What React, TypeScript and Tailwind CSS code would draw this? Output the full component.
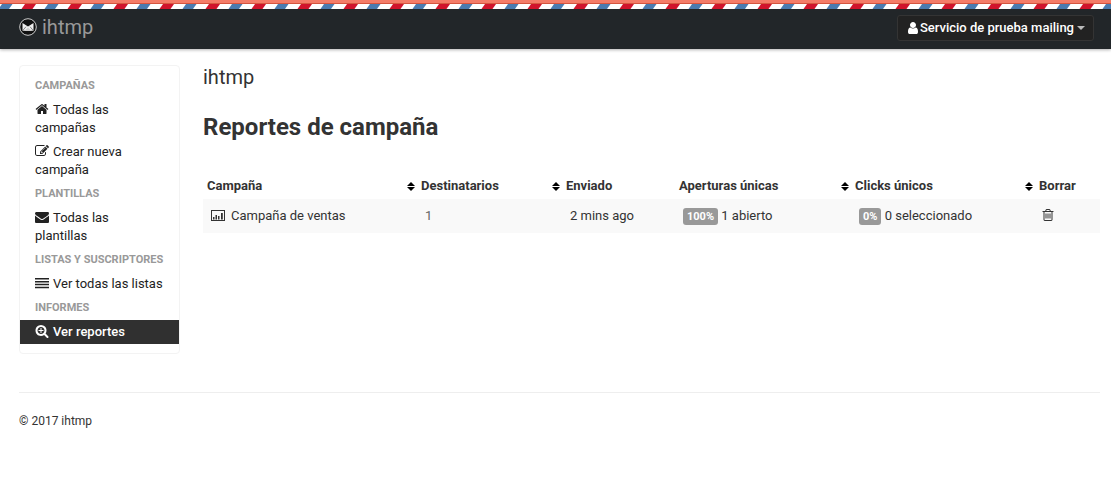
import type { ReactNode } from "react";

interface IconProps {
  d: string;
  className?: string;
}

function Icon({ d, className = "" }: IconProps) {
  return (
    <svg
      viewBox="0 0 1792 1792"
      fill="currentColor"
      aria-hidden="true"
      className={`inline-block size-[14px] align-[-2px] ${className}`}
    >
      <path d={d} />
    </svg>
  );
}

const icons = {
  home: "M1472 992v480q0 26-19 45t-45 19h-384v-384h-256v384h-384q-26 0-45-19t-19-45v-480q0-1 .5-3t.5-3l575-474 575 474q1 2 1 6zm223-69l-62 74q-8 9-21 11h-3q-13 0-21-7l-692-577-692 577q-12 8-24 7-13-2-21-11l-62-74q-8-10-7-23.5t11-21.5l719-599q32-26 76-26t76 26l244 204v-195q0-14 9-23t23-9h192q14 0 23 9t9 23v408l219 182q10 8 11 21.5t-7 23.5z",
  edit: "M888 1184l116-116-152-152-116 116v56h96v96h56zm440-720q-16-16-33 1l-350 350q-17 17-1 33t33-1l350-350q17-17 1-33zm80 594v190q0 119-84.5 203.5t-203.5 84.5h-832q-119 0-203.5-84.5t-84.5-203.5v-832q0-119 84.5-203.5t203.5-84.5h832q63 0 117 25 15 7 18 23 3 17-9 29l-49 49q-14 14-32 8-23-6-45-6h-832q-66 0-113 47t-47 113v832q0 66 47 113t113 47h832q66 0 113-47t47-113v-126q0-13 9-22l64-64q15-15 35-7t20 29zm-96-738l288 288-672 672h-288v-288zm444 132l-92 92-288-288 92-92q28-28 68-28t68 28l152 152q28 28 28 68t-28 68z",
  envelope:
    "M1792 710v794q0 66-47 113t-113 47h-1472q-66 0-113-47t-47-113v-794q44 49 101 87 362 246 497 345 57 42 92.5 65.5t94.5 48 110 24.5h2q51 0 110-24.5t94.5-48 92.5-65.5q170-123 498-345 57-39 100-87zm0-294q0 79-49 151t-122 123q-376 261-468 325-10 7-42.5 31t-54 38.5-52 32.5-57.5 27-50 9h-2q-23 0-50-9t-57.5-27-52-32.5-54-38.5-42.5-31q-91-64-262-182.5t-205-142.5q-62-42-117-115.5t-55-136.5q0-78 41.5-130t118.5-52h1472q65 0 112.5 47t47.5 113z",
  list: "M0 256h1792v200H0zM0 624h1792v200H0zM0 992h1792v200H0zM0 1360h1792v200H0z",
  zoomIn:
    "M1088 800v64q0 13-9.5 22.5t-22.5 9.5h-224v224q0 13-9.5 22.5t-22.5 9.5h-64q-13 0-22.5-9.5t-9.5-22.5v-224h-224q-13 0-22.5-9.5t-9.5-22.5v-64q0-13 9.5-22.5t22.5-9.5h224v-224q0-13 9.5-22.5t22.5-9.5h64q13 0 22.5 9.5t9.5 22.5v224h224q13 0 22.5 9.5t9.5 22.5zm128 32q0-185-131.5-316.5t-316.5-131.5-316.5 131.5-131.5 316.5 131.5 316.5 316.5 131.5 316.5-131.5 131.5-316.5zm512 832q0 53-37.5 90.5t-90.5 37.5q-54 0-90-38l-343-342q-179 124-399 124-143 0-273.5-55.5t-225-150-150-225-55.5-273.5 55.5-273.5 150-225 225-150 273.5-55.5 273.5 55.5 225 150 150 225 55.5 273.5q0 220-124 399l343 343q37 37 37 90z",
  trash:
    "M704 736v576q0 14-9 23t-23 9h-64q-14 0-23-9t-9-23v-576q0-14 9-23t23-9h64q14 0 23 9t9 23zm256 0v576q0 14-9 23t-23 9h-64q-14 0-23-9t-9-23v-576q0-14 9-23t23-9h64q14 0 23 9t9 23zm256 0v576q0 14-9 23t-23 9h-64q-14 0-23-9t-9-23v-576q0-14 9-23t23-9h64q14 0 23 9t9 23zm128 724v-948h-896v948q0 22 7 40.5t14.5 27 10.5 8.5h832q3 0 10.5-8.5t14.5-27 7-40.5zm-672-1076h448l-48-117q-7-9-17-11h-317q-10 2-17 11zm928 32v64q0 14-9 23t-23 9h-96v948q0 83-47 143.5t-113 60.5h-832q-66 0-113-58.5t-47-141.5v-952h-96q-14 0-23-9t-9-23v-64q0-14 9-23t23-9h309l70-167q15-37 54-63t79-26h320q40 0 79 26t54 63l70 167h309q14 0 23 9t9 23z",
  user: "M1536 1399q0 109-62.5 187t-150.5 78h-854q-88 0-150.5-78t-62.5-187q0-85 8.5-160.5t31.5-152 58.5-131 94-89 134.5-34.5q131 128 313 128t313-128q76 0 134.5 34.5t94 89 58.5 131 31.5 152 8.5 160.5zm-256-887q0 159-112.5 271.5t-271.5 112.5-271.5-112.5-112.5-271.5 112.5-271.5 271.5-112.5 271.5 112.5 112.5 271.5z",
};

const menu = [
  {
    title: "Campañas",
    items: [
      { label: "Todas las campañas", icon: icons.home },
      { label: "Crear nueva campaña", icon: icons.edit },
    ],
  },
  {
    title: "Plantillas",
    items: [{ label: "Todas las plantillas", icon: icons.envelope }],
  },
  {
    title: "Listas y suscriptores",
    items: [{ label: "Ver todas las listas", icon: icons.list }],
  },
  {
    title: "Informes",
    items: [{ label: "Ver reportes", icon: icons.zoomIn, active: true }],
  },
];

const columns = [
  { label: "Campaña", sortable: true, width: "" },
  { label: "Destinatarios", sortable: true, width: "w-[145px]" },
  { label: "Enviado", sortable: false, width: "w-[113px]" },
  { label: "Aperturas únicas", sortable: true, width: "w-[176px]" },
  { label: "Clicks únicos", sortable: true, width: "w-[184px]" },
  { label: "Borrar", sortable: false, width: "w-[65px]" },
];

// Airmail edge along the top of the page
function AirmailStripes() {
  return (
    <svg className="block h-[5px] w-full" aria-hidden="true">
      <defs>
        <pattern
          id="airmail"
          x="-2"
          width="46"
          height="5"
          patternUnits="userSpaceOnUse"
        >
          <rect width="46" height="5" fill="#fff" />
          <path d="M4 0h10.500l-3.500 5h-10.500z" fill="#4a7bb0" />
          <path d="M27 0h11l-3.500 5h-11z" fill="#d0142c" />
        </pattern>
      </defs>
      <rect width="100%" height="5" fill="url(#airmail)" />
    </svg>
  );
}

function Logo() {
  return (
    <svg viewBox="0 0 18 18" className="size-[18px]" aria-hidden="true">
      <circle cx="9" cy="9" r="8.300" fill="#111" stroke="#ccc" strokeWidth="1" />
      <path d="M3.500 5v7.800h11V5L9 8.500z" fill="#eee" />
      <path d="M3.500 12.800L7 8.700M14.500 12.800L11 8.700" stroke="#555" strokeWidth=".7" />
      <path d="M5 13l4-3.200L13 13z" fill="#ccc" />
    </svg>
  );
}

function SortArrows() {
  return (
    <svg viewBox="0 0 8 9" className="-mr-0.5 h-[9px] w-2" aria-hidden="true">
      <path d="M0 4L4 0l4 4zM0 5h8L4 9z" fill="#000" />
    </svg>
  );
}

function ChartIcon() {
  return (
    <svg viewBox="0 0 14 12" className="h-3 w-[14px]" aria-hidden="true">
      <rect x=".5" y=".5" width="13" height="10" fill="none" stroke="#333" />
      <path d="M2 7h1.500v2.500H2zM4.500 5H6v4.500H4.500zM7 6h1.500v3.500H7zM10 3h1.800v6.500H10z" fill="#333" />
    </svg>
  );
}

function Badge({ children }: { children: ReactNode }) {
  return (
    <span className="inline-block rounded-[3px] bg-[#999] px-1 py-px text-[11px] leading-[15px] font-bold text-white">
      {children}
    </span>
  );
}

export default function App() {
  return (
    <div className="bg-white font-[Roboto,sans-serif] text-[13px] leading-[18px] text-[#333]">
      <header className="bg-[#222629] shadow-[0_1px_3px_rgba(0,0,0,0.3)]">
        <div className="h-1 border-b border-[#d4553f] bg-[#f47c68]" />
        <AirmailStripes />
        <div className="flex h-10 items-end justify-between pr-[17px] pb-2 pl-[19px]">
          <a href="#" className="flex h-7 items-center gap-[5px] text-xl text-[#999]">
            <Logo />
            ihtmp
          </a>
          <button
            type="button"
            className="flex h-[26px] items-center rounded-[3px] border border-[#343434] bg-[#222] px-2 font-medium text-white"
          >
            <Icon d={icons.user} />
            <span>Servicio de prueba mailing</span>
            <span className="ml-[3px] border-x-4 border-t-4 border-x-transparent border-t-[#bbb]" />
          </button>
        </div>
      </header>

      <div className="pr-[11px] pl-[19px]">
        <div className="flex items-start gap-[23px] pt-4">
          <nav className="w-[161px] shrink-0 rounded border border-[#f3f3f3] pt-2 pb-[9px]">
            {menu.map((group) => (
              <section key={group.title}>
                <h2 className="px-[15px] py-[3px] text-[11px] font-bold whitespace-nowrap text-[#999] uppercase">
                  {group.title}
                </h2>
                <ul>
                  {group.items.map((item) => (
                    <li key={item.label}>
                      <a
                        href="#"
                        className={
                          "active" in item
                            ? "block bg-[#303030] px-[15px] py-[3px] font-medium text-white"
                            : "block px-[15px] py-[3px] text-[#222]"
                        }
                      >
                        <Icon d={item.icon} className="mr-1" />
                        {item.label}
                      </a>
                    </li>
                  ))}
                </ul>
              </section>
            ))}
          </nav>

          <main className="min-w-0 flex-1">
            <p className="text-xl leading-6">ihtmp</p>
            <h1 className="mt-5 text-2xl leading-9 font-bold">
              Reportes de campaña
            </h1>
            <table className="mt-7 w-full table-fixed">
              <thead>
                <tr>
                  {columns.map((column) => (
                    <th
                      key={column.label}
                      className={`px-1 py-1 text-left font-bold ${column.width}`}
                    >
                      <span className="flex items-center justify-between whitespace-nowrap">
                        {column.label}
                        {column.sortable && <SortArrows />}
                      </span>
                    </th>
                  ))}
                </tr>
              </thead>
              <tbody>
                <tr className="h-[34px] bg-[#f9f9f9]">
                  <td className="px-2">
                    <a href="#" className="flex items-center gap-[6px]">
                      <ChartIcon />
                      Campaña de ventas
                    </a>
                  </td>
                  <td className="px-2 text-[#666]">1</td>
                  <td className="px-2">2 mins ago</td>
                  <td className="px-2">
                    <Badge>100%</Badge> 1 abierto
                  </td>
                  <td className="px-2">
                    <Badge>0%</Badge> 0 seleccionado
                  </td>
                  <td className="px-[6px]">
                    <button type="button" aria-label="Borrar" className="block">
                      <Icon d={icons.trash} />
                    </button>
                  </td>
                </tr>
              </tbody>
            </table>
          </main>
        </div>

        <footer className="mt-[38px] border-t border-[#eee] pt-[19px] text-xs leading-[18px]">
          © 2017 ihtmp
        </footer>
      </div>
    </div>
  );
}
